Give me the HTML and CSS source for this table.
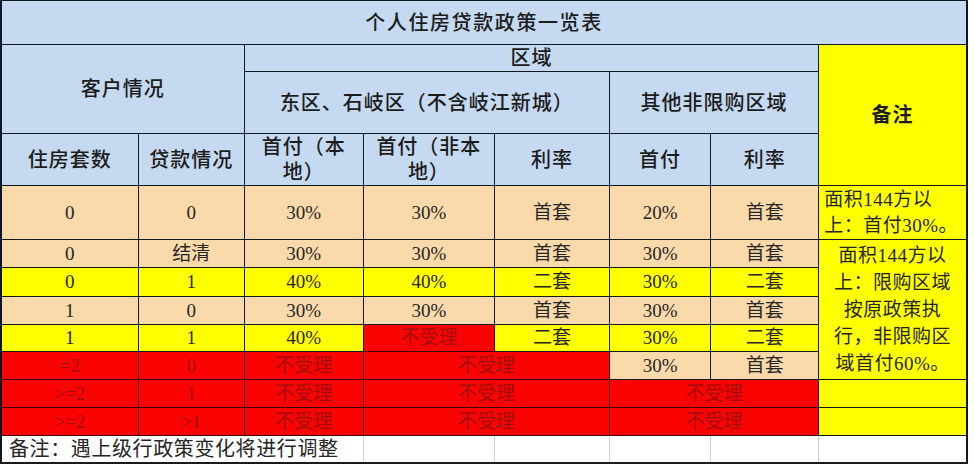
FILE: index.html
```html
<!DOCTYPE html>
<html lang="zh-CN">
<head>
<meta charset="utf-8">
<title>个人住房贷款政策一览表</title>
<link rel="stylesheet" href="styles.css">
</head>
<body>
<table class="policy">
  <colgroup>
    <col class="c1"><col class="c2"><col class="c3"><col class="c4"><col class="c5"><col class="c6"><col class="c7"><col class="c8">
  </colgroup>
  <tr class="r-title">
    <td colspan="8" class="blue title">个人住房贷款政策一览表</td>
  </tr>
  <tr class="r-area">
    <td colspan="2" rowspan="2" class="blue head">客户情况</td>
    <td colspan="5" class="blue head">区域</td>
    <td rowspan="3" class="yellow head remark">备注</td>
  </tr>
  <tr class="r-zone">
    <td colspan="3" class="blue head">东区、石岐区（不含岐江新城）</td>
    <td colspan="2" class="blue head">其他非限购区域</td>
  </tr>
  <tr class="r-cols">
    <td class="blue head">住房套数</td>
    <td class="blue head">贷款情况</td>
    <td class="blue head wrap">首付（本<br>地）</td>
    <td class="blue head wrap">首付（非本<br>地）</td>
    <td class="blue head">利率</td>
    <td class="blue head">首付</td>
    <td class="blue head">利率</td>
  </tr>
  <tr class="r-first">
    <td class="peach">0</td><td class="peach">0</td><td class="peach">30%</td><td class="peach">30%</td><td class="peach">首套</td><td class="peach">20%</td><td class="peach">首套</td>
    <td class="yellow note">面积144方以<br>上：首付30%。</td>
  </tr>
  <tr class="r-data">
    <td class="peach">0</td><td class="peach">结清</td><td class="peach">30%</td><td class="peach">30%</td><td class="peach">首套</td><td class="peach">30%</td><td class="peach">首套</td>
    <td rowspan="5" class="yellow note center">面积144方以<br>上：限购区域<br>按原政策执<br>行，非限购区<br>域首付60%。</td>
  </tr>
  <tr class="r-data r-h29">
    <td class="yellow">0</td><td class="yellow">1</td><td class="yellow">40%</td><td class="yellow">40%</td><td class="yellow">二套</td><td class="yellow">30%</td><td class="yellow">二套</td>
  </tr>
  <tr class="r-data">
    <td class="peach">1</td><td class="peach">0</td><td class="peach">30%</td><td class="peach">30%</td><td class="peach">首套</td><td class="peach">30%</td><td class="peach">首套</td>
  </tr>
  <tr class="r-data r-h27">
    <td class="yellow">1</td><td class="yellow">1</td><td class="yellow">40%</td><td class="red">不受理</td><td class="yellow">二套</td><td class="yellow">30%</td><td class="yellow">二套</td>
  </tr>
  <tr class="r-data">
    <td class="red">=2</td><td class="red">0</td><td class="red">不受理</td><td colspan="2" class="red">不受理</td><td class="peach">30%</td><td class="peach">首套</td>
  </tr>
  <tr class="r-data">
    <td class="red">&gt;=2</td><td class="red">1</td><td class="red">不受理</td><td colspan="2" class="red">不受理</td><td colspan="2" class="red">不受理</td><td class="yellow"></td>
  </tr>
  <tr class="r-data">
    <td class="red">&gt;=2</td><td class="red">&gt;1</td><td class="red">不受理</td><td colspan="2" class="red">不受理</td><td colspan="2" class="red">不受理</td><td class="yellow"></td>
  </tr>
  <tr class="r-foot">
    <td colspan="3" class="foot first">备注：遇上级行政策变化将进行调整</td>
    <td class="foot"></td><td class="foot"></td><td class="foot"></td><td class="foot"></td><td class="foot last"></td>
  </tr>
</table>
</body>
</html>
```

FILE: styles.css
```css
html, body {
  margin: 0;
  padding: 0;
  background: #ffffff;
}

body {
  width: 974px;
  height: 468px;
  overflow: hidden;
  font-family: "Liberation Serif", "Noto Sans CJK SC", serif;
  color: #262626;
}

.policy {
  border-collapse: collapse;
  table-layout: fixed;
  width: 968px;
  border-top: 1px solid #0c1624;
  border-left: 2px solid #0c1624;
  border-right: 2px solid #0c1624;
  border-bottom: 2px solid #1a1a1a;
}

.c1 { width: 137px; }
.c2 { width: 106px; }
.c3 { width: 119px; }
.c4 { width: 131px; }
.c5 { width: 115px; }
.c6 { width: 101px; }
.c7 { width: 108px; }
.c8 { width: 148px; }

.policy td {
  border: 1px solid #101820;
  padding: 0;
  text-align: center;
  vertical-align: middle;
  font-size: 19px;
  line-height: 24px;
  overflow: hidden;
  white-space: nowrap;
}

.r-title { height: 44px; }
.r-area { height: 27px; }
.r-zone { height: 62px; }
.r-cols { height: 52px; }
.r-first { height: 54px; }
.r-data { height: 28px; }
.r-h29 { height: 29px; }
.r-h27 { height: 27px; }
.r-foot { height: 27px; }

.policy td.blue { background: #c5d9f0; }
.policy td.peach { background: #fad9ab; }
.policy td.yellow { background: #ffff00; }
.policy td.red {
  background: #fb0303;
  color: #a30c0c;
  border-color: #3a0a0a;
}

.policy td.head {
  font-size: 20px;
  font-weight: 500;
  color: #1c1c1c;
  letter-spacing: 1px;
}

.policy td.title {
  font-size: 20px;
  font-weight: 500;
  letter-spacing: 1.6px;
  color: #1c1c1c;
}

.policy td.remark {
  font-weight: 700;
}

.policy td.wrap {
  line-height: 25px;
}

.policy td.note {
  text-align: left;
  font-size: 19px;
  line-height: 26px;
  padding-left: 5px;
  letter-spacing: 0.5px;
}

.policy td.note.center {
  text-align: center;
  padding-left: 0;
  line-height: 27px;
}

.policy td.foot {
  background: #ffffff;
  border-color: #cfcfcf;
  border-top-color: #101820;
  border-bottom-color: #1a1a1a;
}

.policy td.foot.first {
  text-align: left;
  padding-left: 7px;
  font-size: 20px;
  letter-spacing: 0.6px;
  border-left-color: #101820;
  overflow: visible;
}

.policy td.foot.last {
  border-right-color: #0c1624;
}
```
